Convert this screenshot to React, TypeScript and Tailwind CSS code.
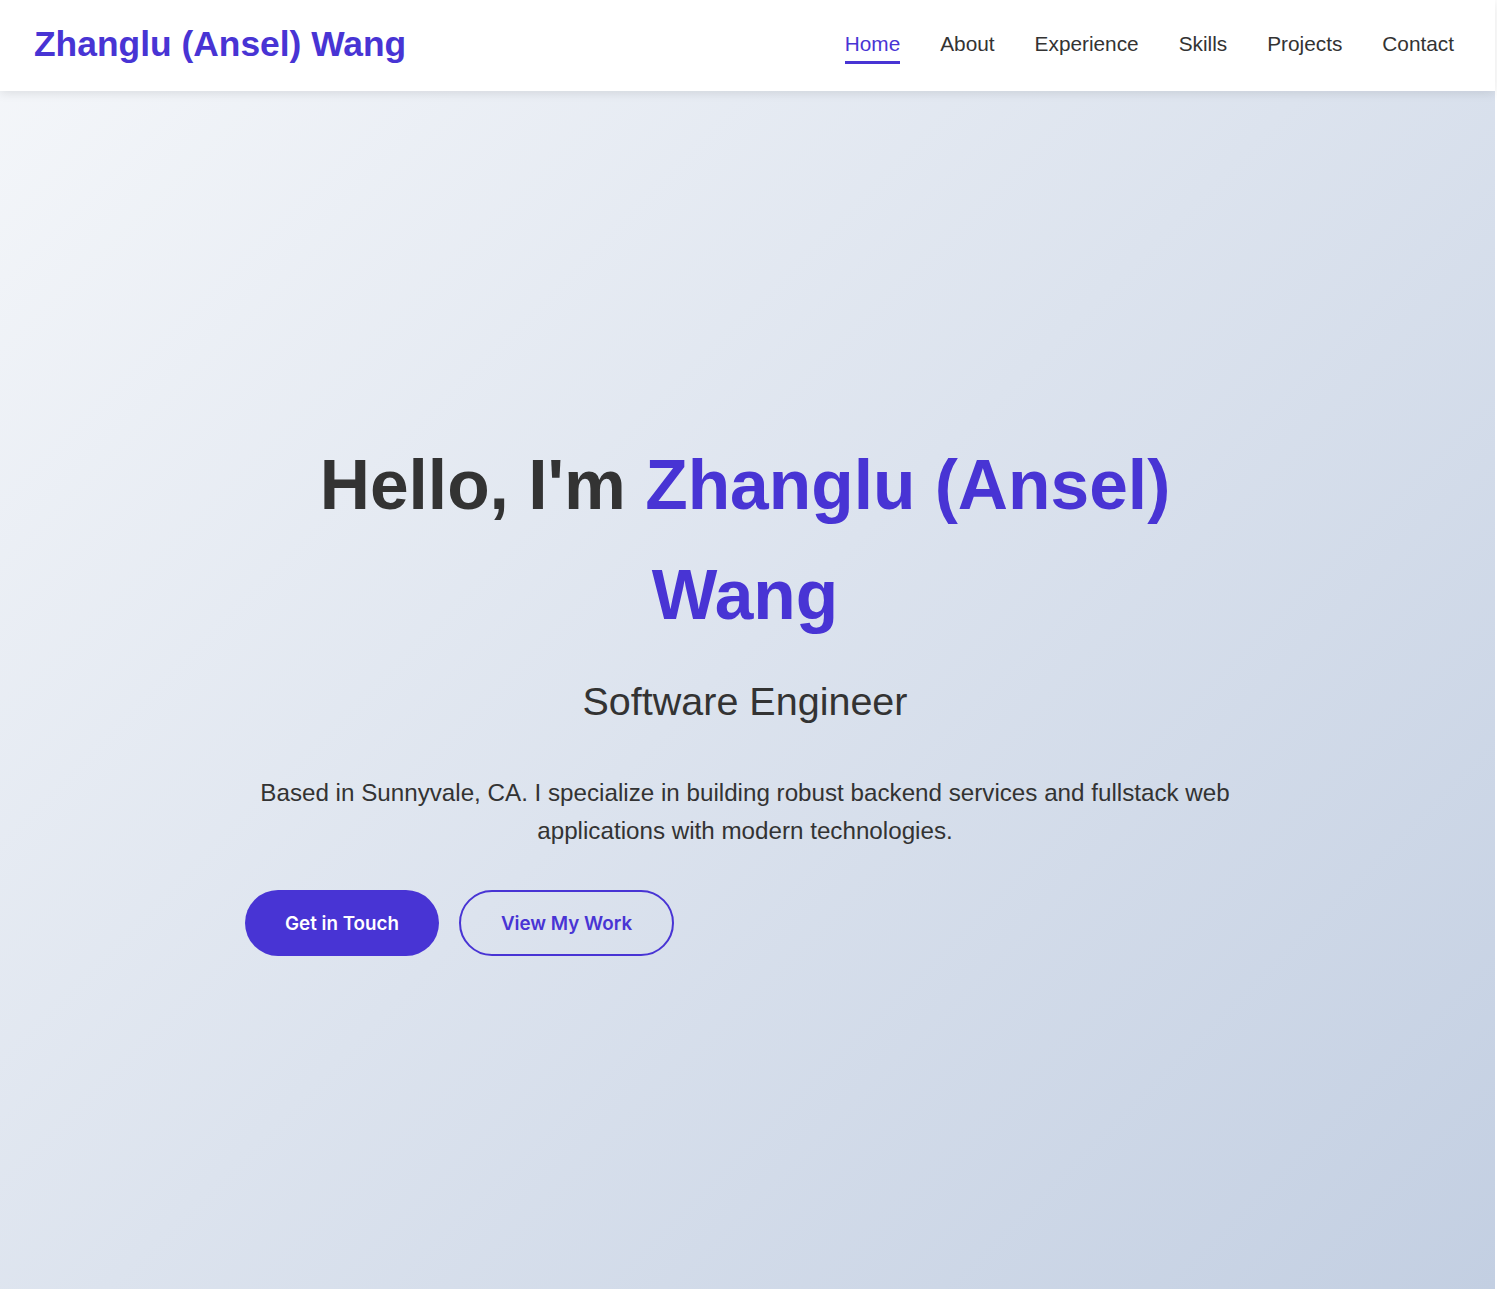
import React from 'react';

const navLinks = ['Home', 'About', 'Experience', 'Skills', 'Projects', 'Contact'];

const Header: React.FC = () => {
  return (
    <header className="h-[91px] bg-white flex items-center justify-between pl-[34px] pr-[41px] pb-[3px] shadow-[0_2px_10px_rgba(0,0,0,0.1)] relative z-10">
      <a href="#home" className="text-[35.4px] font-bold text-[#4834d4] leading-[1.6]">
        Zhanglu (Ansel) Wang
      </a>
      <nav className="flex items-center gap-[40px]">
        {navLinks.map((link, index) => (
          <a
            key={link}
            href={`#${link.toLowerCase()}`}
            className={`relative text-[20.8px] leading-[32px] ${index === 0 ? 'text-[#4834d4]' : 'text-[#333]'}`}
          >
            {link}
            {index === 0 && (
              <span className="absolute left-0 right-0 -bottom-[4px] h-[3px] bg-[#4834d4]"></span>
            )}
          </a>
        ))}
      </nav>
    </header>
  );
};

const Hero: React.FC = () => {
  return (
    <section id="home" className="flex-1 pt-[339px] pr-[5px]">
      <div className="max-w-[1000px] mx-auto">
        <h1 className="text-center text-[69.5px] font-bold leading-[110px] text-[#333]">
          Hello, I'm <span className="text-[#4834d4]">Zhanglu (Ansel) Wang</span>
        </h1>
        <h2 className="mt-[19px] text-center text-[39.5px] leading-[64px] text-[#333]">Software Engineer</h2>
        <p className="mt-[41px] text-center text-[24.2px] leading-[38.4px] text-[#333]">
          Based in Sunnyvale, CA. I specialize in building robust backend services and fullstack web applications
          with modern technologies.
        </p>
        <div className="mt-[39px] flex gap-[20px] font-['Inter',sans-serif]">
          <a
            href="#contact"
            className="h-[66px] w-[194px] pt-[3px] flex items-center justify-center rounded-full bg-[#4834d4] text-white text-[18.8px] font-semibold"
          >
            Get in Touch
          </a>
          <a
            href="#projects"
            className="h-[66px] w-[215px] pt-[3px] flex items-center justify-center rounded-full border-2 border-[#4834d4] text-[#4834d4] text-[18.8px] font-semibold"
          >
            View My Work
          </a>
        </div>
      </div>
    </section>
  );
};

export default function App() {
  return (
    <div className="w-[1495px] min-h-screen flex flex-col bg-[linear-gradient(135deg,#f5f7fa_0%,#c3cfe2_100%)] font-['Liberation_Sans',Arial,sans-serif]">
      <Header />
      <Hero />
    </div>
  );
}
